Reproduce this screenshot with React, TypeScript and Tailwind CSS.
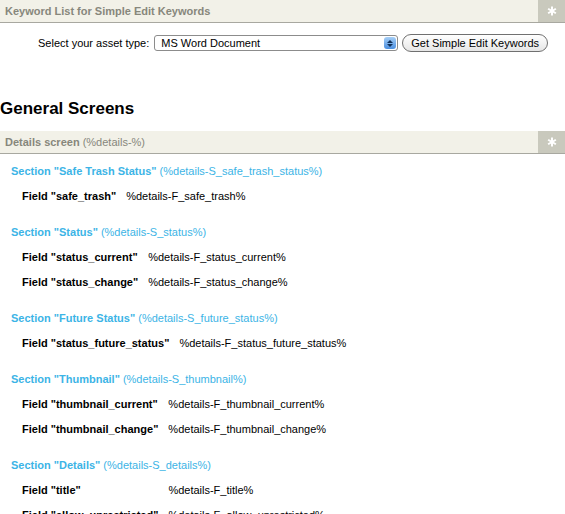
const font = { fontFamily: '"Liberation Sans", Arial, sans-serif' };

type Field = { name: string; code: string };
type Section = { title: string; code: string; fields: Field[] };

const sections: Section[] = [
  {
    title: "Safe Trash Status",
    code: "%details-S_safe_trash_status%",
    fields: [{ name: "safe_trash", code: "%details-F_safe_trash%" }],
  },
  {
    title: "Status",
    code: "%details-S_status%",
    fields: [
      { name: "status_current", code: "%details-F_status_current%" },
      { name: "status_change", code: "%details-F_status_change%" },
    ],
  },
  {
    title: "Future Status",
    code: "%details-S_future_status%",
    fields: [
      { name: "status_future_status", code: "%details-F_status_future_status%" },
    ],
  },
  {
    title: "Thumbnail",
    code: "%details-S_thumbnail%",
    fields: [
      { name: "thumbnail_current", code: "%details-F_thumbnail_current%" },
      { name: "thumbnail_change", code: "%details-F_thumbnail_change%" },
    ],
  },
  {
    title: "Details",
    code: "%details-S_details%",
    fields: [
      { name: "title", code: "%details-F_title%" },
      { name: "allow_unrestricted", code: "%details-F_allow_unrestricted%" },
    ],
  },
];

function Star() {
  return (
    <svg width="10" height="10" viewBox="0 0 10 10">
      <g stroke="white" strokeWidth="2" strokeLinecap="butt">
        <line x1="5" y1="0.5" x2="5" y2="9.5" />
        <line x1="1.1" y1="2.75" x2="8.9" y2="7.25" />
        <line x1="1.1" y1="7.25" x2="8.9" y2="2.75" />
      </g>
    </svg>
  );
}

function Bar({ children }: { children: React.ReactNode }) {
  return (
    <div className="flex h-[23px] bg-[#f2f1e8] border-b border-[#a8a8a0]">
      <div className="flex-1 flex items-center pl-[5px] text-[11px] text-[#87877c]">
        {children}
      </div>
      <div className="w-[27px] bg-[#c9c9bd] flex items-center justify-center">
        <Star />
      </div>
    </div>
  );
}

export default function App() {
  return (
    <div className="w-[565px] h-[514px] overflow-hidden bg-white text-black" style={font}>
      <Bar>
        <span className="font-bold">Keyword List for Simple Edit Keywords</span>
      </Bar>

      <div className="flex items-center pl-[38px] pt-[11px] gap-[4px] text-[11px]">
        <span>Select your asset type:</span>
        <div className="ml-[1px] w-[244px] h-[16px] flex items-center border border-[#8c8c8c] rounded-[3px] bg-white pl-[6px] relative">
          <span className="text-[11px]">MS Word Document</span>
          <div className="absolute right-[1px] top-[1px] w-[12px] h-[12px] rounded-[3px] bg-gradient-to-b from-[#a6cff7] to-[#4a8ede] flex flex-col items-center justify-center gap-[1px]">
            <svg width="6" height="3" viewBox="0 0 6 3"><path d="M3 0L6 3H0z" fill="#10305a" /></svg>
            <svg width="6" height="3" viewBox="0 0 6 3"><path d="M0 0H6L3 3z" fill="#10305a" /></svg>
          </div>
        </div>
        <button className="h-[18px] px-[8px] rounded-full border border-[#707070] bg-gradient-to-b from-white to-[#e6e6e6] text-[11px] text-black">
          Get Simple Edit Keywords
        </button>
      </div>

      <h1 className="mt-[46px] text-[17px] font-bold leading-[22px]">General Screens</h1>

      <div className="mt-[11px]">
        <Bar>
          <span className="font-bold">Details screen</span>
          <span>&nbsp;(%details-%)</span>
        </Bar>
      </div>

      <div className="pl-[11px] pt-[10px] text-[11px]">
        {sections.map((s) => (
          <div key={s.title} className="mb-[16px]">
            <div className="text-[#3cb4e6] h-[14px] leading-[14px]">
              <span className="font-bold">Section "{s.title}"</span> ({s.code})
            </div>
            <table className="ml-[11px] mt-[6px] border-collapse">
              <tbody>
                {s.fields.map((f) => (
                  <tr key={f.name} className="h-[25px]">
                    <td className="font-bold pr-[10px] align-middle whitespace-nowrap">
                      Field "{f.name}"
                    </td>
                    <td className="align-middle whitespace-nowrap">{f.code}</td>
                  </tr>
                ))}
              </tbody>
            </table>
          </div>
        ))}
      </div>
    </div>
  );
}
